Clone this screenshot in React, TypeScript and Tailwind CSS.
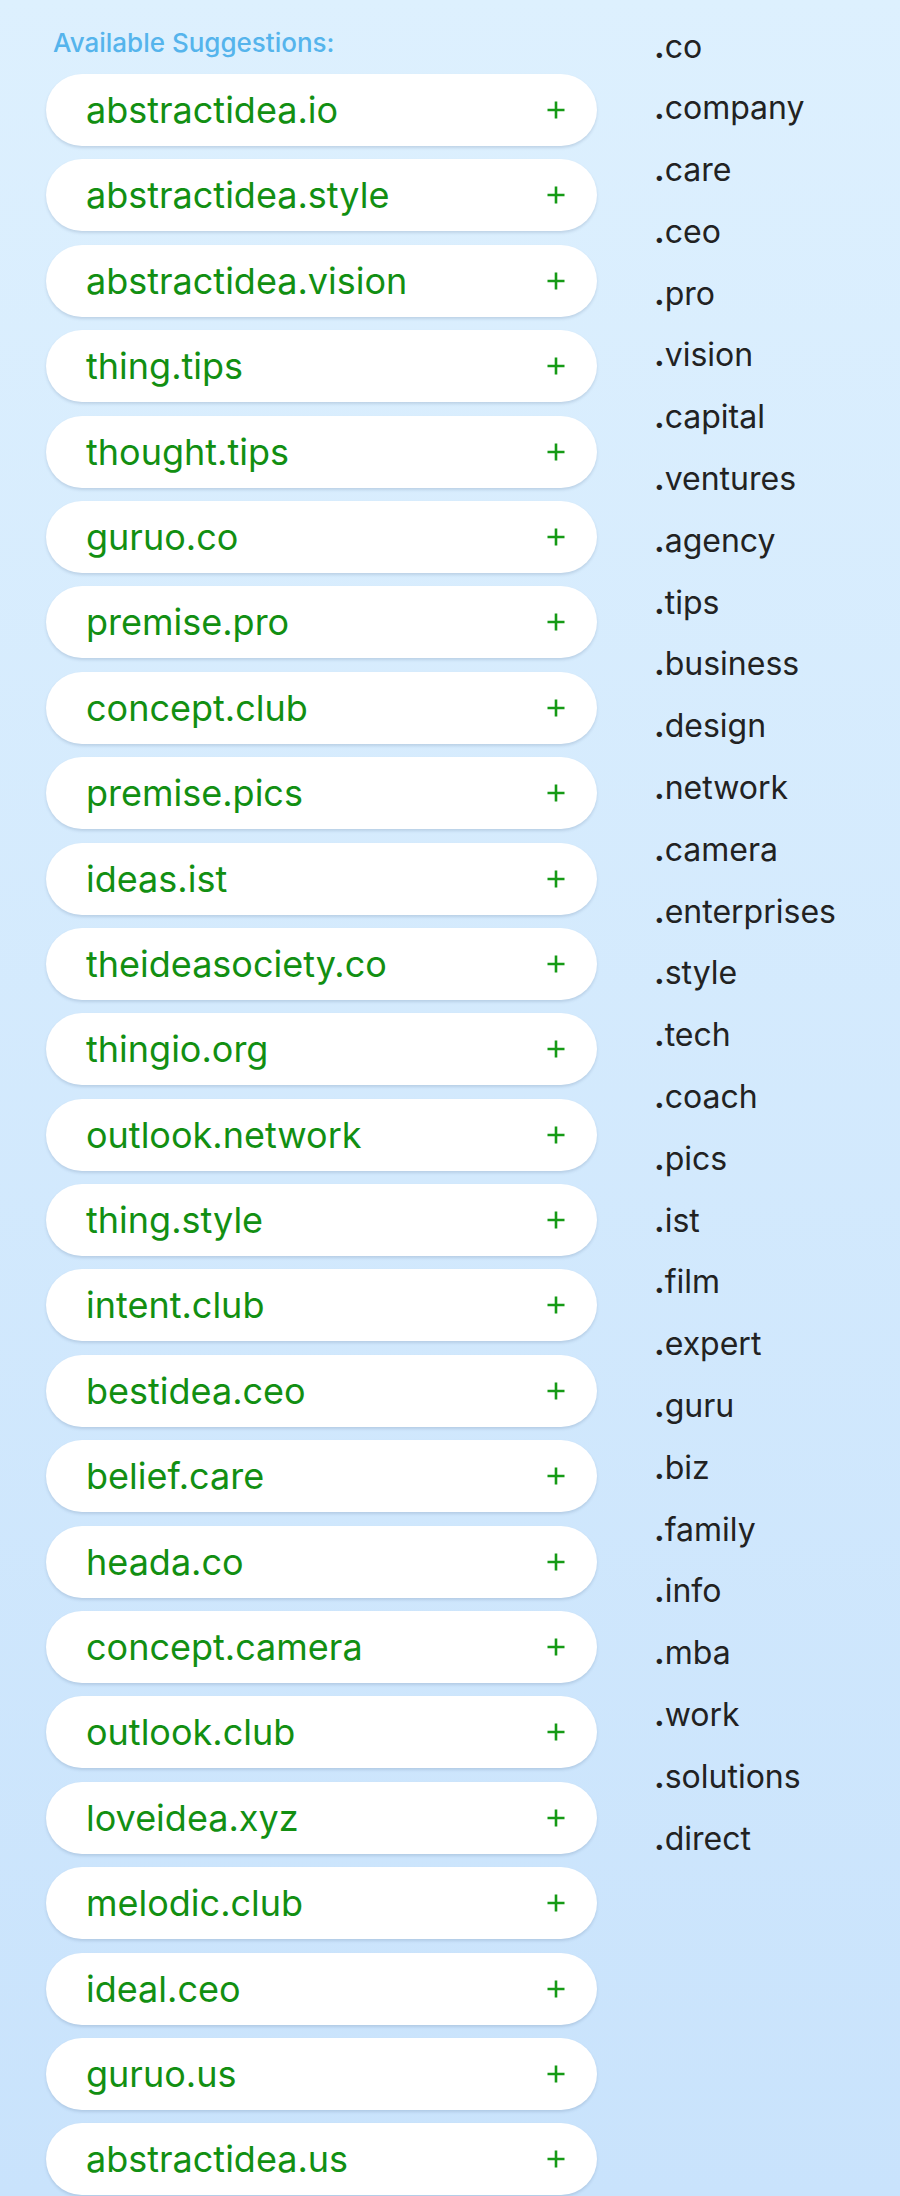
const suggestions = [
  'abstractidea.io',
  'abstractidea.style',
  'abstractidea.vision',
  'thing.tips',
  'thought.tips',
  'guruo.co',
  'premise.pro',
  'concept.club',
  'premise.pics',
  'ideas.ist',
  'theideasociety.co',
  'thingio.org',
  'outlook.network',
  'thing.style',
  'intent.club',
  'bestidea.ceo',
  'belief.care',
  'heada.co',
  'concept.camera',
  'outlook.club',
  'loveidea.xyz',
  'melodic.club',
  'ideal.ceo',
  'guruo.us',
  'abstractidea.us',
];

const tlds = [
  'co', 'company', 'care', 'ceo', 'pro', 'vision', 'capital', 'ventures', 'agency', 'tips',
  'business', 'design', 'network', 'camera', 'enterprises', 'style', 'tech', 'coach', 'pics', 'ist',
  'film', 'expert', 'guru', 'biz', 'family', 'info', 'mba', 'work', 'solutions', 'direct',
];

function PlusIcon() {
  return (
    <svg className="h-[20px] w-[20px] shrink-0" viewBox="0 0 20 20" fill="none" stroke="#159a15" aria-hidden="true">
      <path strokeWidth={2.6} d="M10 1.5v17M1.5 10h17" />
    </svg>
  );
}

function SuggestionPill({ name }: { name: string }) {
  return (
    <div className="flex h-[72px] items-center justify-between rounded-full bg-white pl-[40px] pr-[31px] shadow-[0_2px_3px_rgba(60,90,130,0.18)]">
      <span className="text-[36px] leading-none text-[#128f12]">{name}</span>
      <PlusIcon />
    </div>
  );
}

export default function App() {
  return (
    <div
      className="flex min-h-[2196px] w-full bg-gradient-to-b from-[#ddf0fe] to-[#c9e3fc]"
      style={{ fontFamily: 'Inter, "Noto Sans", sans-serif' }}
    >
      <div className="ml-[46px] flex w-[551px] shrink-0 flex-col pt-[27px]">
        <div className="pl-[7px] text-[26px] leading-[32px] font-medium text-[#55b4ec]">Available Suggestions:</div>
        <div className="mt-[15px] flex flex-col gap-[13.4px]">
          {suggestions.map((s) => (
            <SuggestionPill key={s} name={s} />
          ))}
        </div>
      </div>
      <div className="ml-[57px] flex flex-col pt-[15.5px]">
        {tlds.map((t) => (
          <div key={t} className="text-[32px] leading-[61.8px] text-[#222]">
            <span className="font-bold">.</span>
            {t}
          </div>
        ))}
      </div>
    </div>
  );
}
